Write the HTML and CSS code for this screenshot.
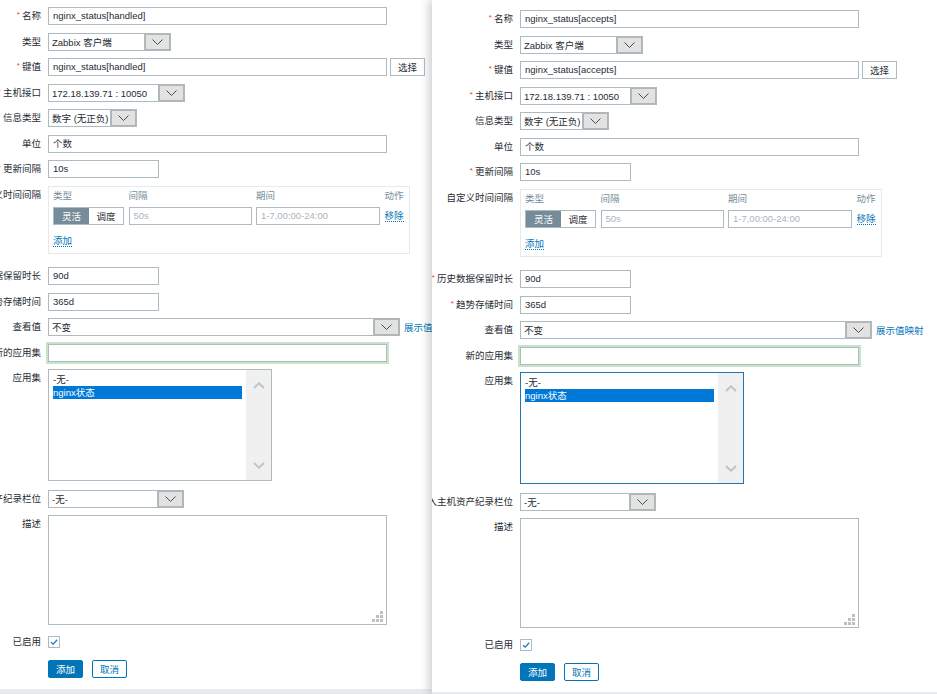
FILE: index.html
```html
<!DOCTYPE html>
<html lang="zh-CN">
<head>
<meta charset="utf-8">
<title>监控项</title>
<link rel="stylesheet" href="styles.css">
</head>
<body>
<div class="desk">

  <section class="win win-left">
    <div class="win-body">
      <div class="form">
        <div class="lbl"><span class="req">*</span>名称</div>
        <div class="inp w-full">nginx_status[handled]</div>

        <div class="lbl">类型</div>
        <div class="sel w-type"><span class="sel-text">Zabbix 客户端</span><span class="sel-btn"><svg width="11" height="6" viewBox="0 0 11 6"><polyline points="0.5,0.5 5.5,5.5 10.5,0.5" fill="none" stroke="#4a4a4a" stroke-width="1"/></svg></span></div>

        <div class="lbl"><span class="req">*</span>键值</div>
        <div class="line"><div class="inp w-full">nginx_status[handled]</div><span class="btn-plain">选择</span></div>

        <div class="lbl"><span class="req">*</span>主机接口</div>
        <div class="sel w-iface"><span class="sel-text">172.18.139.71 : 10050</span><span class="sel-btn"><svg width="11" height="6" viewBox="0 0 11 6"><polyline points="0.5,0.5 5.5,5.5 10.5,0.5" fill="none" stroke="#4a4a4a" stroke-width="1"/></svg></span></div>

        <div class="lbl">信息类型</div>
        <div class="sel w-info"><span class="sel-text">数字 (无正负)</span><span class="sel-btn"><svg width="11" height="6" viewBox="0 0 11 6"><polyline points="0.5,0.5 5.5,5.5 10.5,0.5" fill="none" stroke="#4a4a4a" stroke-width="1"/></svg></span></div>

        <div class="lbl">单位</div>
        <div class="inp w-full">个数</div>

        <div class="lbl"><span class="req">*</span>更新间隔</div>
        <div class="inp w-short">10s</div>

        <div class="lbl">自定义时间间隔</div>
        <div class="intervals">
          <div class="iv-grid">
            <span class="iv-h">类型</span><span class="iv-h">间隔</span><span class="iv-h">期间</span><span class="iv-h">动作</span>
            <div class="seg"><span class="seg-on">灵活</span><span class="seg-off">调度</span></div>
            <div class="inp ph">50s</div>
            <div class="inp ph">1-7,00:00-24:00</div>
            <span class="dlink">移除</span>
          </div>
          <span class="dlink add">添加</span>
        </div>

        <div class="lbl"><span class="req">*</span>历史数据保留时长</div>
        <div class="inp w-short">90d</div>

        <div class="lbl"><span class="req">*</span>趋势存储时间</div>
        <div class="inp w-short">365d</div>

        <div class="lbl">查看值</div>
        <div class="line"><div class="sel w-view"><span class="sel-text">不变</span><span class="sel-btn"><svg width="11" height="6" viewBox="0 0 11 6"><polyline points="0.5,0.5 5.5,5.5 10.5,0.5" fill="none" stroke="#4a4a4a" stroke-width="1"/></svg></span></div><span class="link">展示值映射</span></div>

        <div class="lbl">新的应用集</div>
        <div class="inp w-full glow"></div>

        <div class="lbl">应用集</div>
        <div class="lst">
          <div class="lst-items"><div class="opt">-无-</div><div class="opt opt-on">nginx状态</div></div>
          <div class="lst-bar">
            <svg width="12" height="7" viewBox="0 0 12 7"><polyline points="1,6 6,1.3 11,6" fill="none" stroke="#c3c3c3" stroke-width="2"/></svg>
            <svg width="12" height="7" viewBox="0 0 12 7"><polyline points="1,1 6,5.7 11,1" fill="none" stroke="#c3c3c3" stroke-width="2"/></svg>
          </div>
        </div>

        <div class="lbl">填入主机资产纪录栏位</div>
        <div class="sel w-inv"><span class="sel-text">-无-</span><span class="sel-btn"><svg width="11" height="6" viewBox="0 0 11 6"><polyline points="0.5,0.5 5.5,5.5 10.5,0.5" fill="none" stroke="#4a4a4a" stroke-width="1"/></svg></span></div>

        <div class="lbl">描述</div>
        <div class="ta"><svg class="grip" width="11" height="11" viewBox="0 0 11 11"><rect x="8" y="0" width="3" height="3" fill="#c0c0c0"/><rect x="4" y="4" width="3" height="3" fill="#c0c0c0"/><rect x="8" y="4" width="3" height="3" fill="#c0c0c0"/><rect x="0" y="8" width="3" height="3" fill="#c0c0c0"/><rect x="4" y="8" width="3" height="3" fill="#c0c0c0"/><rect x="8" y="8" width="3" height="3" fill="#c0c0c0"/></svg></div>

        <div class="lbl">已启用</div>
        <div class="chk-row"><span class="chk"><svg width="10" height="10" viewBox="0 0 10 10"><polyline points="2,5.2 4.2,7.2 8.2,2.8" fill="none" stroke="#1f7cc1" stroke-width="1.3"/></svg></span></div>

        <div class="lbl"></div>
        <div class="actions"><span class="btn btn-primary">添加</span><span class="btn btn-alt">取消</span></div>
      </div>
    </div>
    <div class="win-foot"></div>
  </section>

  <section class="win win-right">
    <div class="win-body">
      <div class="form">
        <div class="lbl"><span class="req">*</span>名称</div>
        <div class="inp w-full">nginx_status[accepts]</div>

        <div class="lbl">类型</div>
        <div class="sel w-type"><span class="sel-text">Zabbix 客户端</span><span class="sel-btn"><svg width="11" height="6" viewBox="0 0 11 6"><polyline points="0.5,0.5 5.5,5.5 10.5,0.5" fill="none" stroke="#4a4a4a" stroke-width="1"/></svg></span></div>

        <div class="lbl"><span class="req">*</span>键值</div>
        <div class="line"><div class="inp w-full">nginx_status[accepts]</div><span class="btn-plain">选择</span></div>

        <div class="lbl"><span class="req">*</span>主机接口</div>
        <div class="sel w-iface"><span class="sel-text">172.18.139.71 : 10050</span><span class="sel-btn"><svg width="11" height="6" viewBox="0 0 11 6"><polyline points="0.5,0.5 5.5,5.5 10.5,0.5" fill="none" stroke="#4a4a4a" stroke-width="1"/></svg></span></div>

        <div class="lbl">信息类型</div>
        <div class="sel w-info"><span class="sel-text">数字 (无正负)</span><span class="sel-btn"><svg width="11" height="6" viewBox="0 0 11 6"><polyline points="0.5,0.5 5.5,5.5 10.5,0.5" fill="none" stroke="#4a4a4a" stroke-width="1"/></svg></span></div>

        <div class="lbl">单位</div>
        <div class="inp w-full">个数</div>

        <div class="lbl"><span class="req">*</span>更新间隔</div>
        <div class="inp w-short">10s</div>

        <div class="lbl">自定义时间间隔</div>
        <div class="intervals">
          <div class="iv-grid">
            <span class="iv-h">类型</span><span class="iv-h">间隔</span><span class="iv-h">期间</span><span class="iv-h">动作</span>
            <div class="seg"><span class="seg-on">灵活</span><span class="seg-off">调度</span></div>
            <div class="inp ph">50s</div>
            <div class="inp ph">1-7,00:00-24:00</div>
            <span class="dlink">移除</span>
          </div>
          <span class="dlink add">添加</span>
        </div>

        <div class="lbl"><span class="req">*</span>历史数据保留时长</div>
        <div class="inp w-short">90d</div>

        <div class="lbl"><span class="req">*</span>趋势存储时间</div>
        <div class="inp w-short">365d</div>

        <div class="lbl">查看值</div>
        <div class="line"><div class="sel w-view"><span class="sel-text">不变</span><span class="sel-btn"><svg width="11" height="6" viewBox="0 0 11 6"><polyline points="0.5,0.5 5.5,5.5 10.5,0.5" fill="none" stroke="#4a4a4a" stroke-width="1"/></svg></span></div><span class="link">展示值映射</span></div>

        <div class="lbl">新的应用集</div>
        <div class="inp w-full glow"></div>

        <div class="lbl">应用集</div>
        <div class="lst lst-focus">
          <div class="lst-items"><div class="opt">-无-</div><div class="opt opt-on">nginx状态</div></div>
          <div class="lst-bar">
            <svg width="12" height="7" viewBox="0 0 12 7"><polyline points="1,6 6,1.3 11,6" fill="none" stroke="#c3c3c3" stroke-width="2"/></svg>
            <svg width="12" height="7" viewBox="0 0 12 7"><polyline points="1,1 6,5.7 11,1" fill="none" stroke="#c3c3c3" stroke-width="2"/></svg>
          </div>
        </div>

        <div class="lbl">填入主机资产纪录栏位</div>
        <div class="sel w-inv"><span class="sel-text">-无-</span><span class="sel-btn"><svg width="11" height="6" viewBox="0 0 11 6"><polyline points="0.5,0.5 5.5,5.5 10.5,0.5" fill="none" stroke="#4a4a4a" stroke-width="1"/></svg></span></div>

        <div class="lbl">描述</div>
        <div class="ta"><svg class="grip" width="11" height="11" viewBox="0 0 11 11"><rect x="8" y="0" width="3" height="3" fill="#c0c0c0"/><rect x="4" y="4" width="3" height="3" fill="#c0c0c0"/><rect x="8" y="4" width="3" height="3" fill="#c0c0c0"/><rect x="0" y="8" width="3" height="3" fill="#c0c0c0"/><rect x="4" y="8" width="3" height="3" fill="#c0c0c0"/><rect x="8" y="8" width="3" height="3" fill="#c0c0c0"/></svg></div>

        <div class="lbl">已启用</div>
        <div class="chk-row"><span class="chk"><svg width="10" height="10" viewBox="0 0 10 10"><polyline points="2,5.2 4.2,7.2 8.2,2.8" fill="none" stroke="#1f7cc1" stroke-width="1.3"/></svg></span></div>

        <div class="lbl"></div>
        <div class="actions"><span class="btn btn-primary">添加</span><span class="btn btn-alt">取消</span></div>
      </div>
    </div>
    <div class="win-foot"></div>
  </section>

</div>
</body>
</html>
```
FILE: styles.css
```css
* { box-sizing: border-box; }
html, body { margin: 0; padding: 0; }
body {
  font-family: "Liberation Sans", "Noto Sans CJK SC", sans-serif;
  font-size: 9.5px;
  color: #1f2c33;
  background: #fff;
  overflow: hidden;
}
.desk { display: flex; height: 694px; }
.win {
  display: flex;
  flex-direction: column;
  height: 694px;
  background: #fff;
  overflow: hidden;
}
.win-left { width: 432px; flex: none; }
.win-right {
  flex: 1;
  position: relative;
  z-index: 1;
  box-shadow: -3px 0 9px rgba(0, 0, 0, 0.2);
}
.win-body { flex: 1; overflow: hidden; }
.win-foot { background: #e8ebee; flex: none; }
.win-left .win-foot { height: 5px; }
.win-right .win-foot { height: 2px; }

.form {
  display: grid;
  grid-template-columns: 140px max-content;
  column-gap: 7px;
  row-gap: 7.5px;
  align-items: start;
  width: max-content;
}
.win-left .form { margin-left: -99px; padding-top: 7px; }
.win-right .form { margin-left: -59px; padding-top: 10px; }

.lbl {
  text-align: right;
  height: 18px;
  line-height: 18px;
  white-space: nowrap;
}
.req {
  color: #e0403a;
  font-size: 8px;
  margin-right: 2px;
  position: relative;
  top: -2px;
}

.inp {
  height: 18px;
  border: 1px solid #acbbc2;
  background: #fff;
  padding: 0 4px;
  line-height: 16px;
  white-space: nowrap;
  overflow: hidden;
}
.w-full { width: 339px; }
.w-short { width: 111px; }
.ph { color: #a9b5bc; }
.glow { box-shadow: 0 0 0 2px #c8e4c8; }

.line { display: flex; align-items: center; gap: 3px; }
.btn-plain {
  width: 35px;
  height: 18px;
  border: 1px solid #acbbc2;
  background: #fff;
  display: flex;
  align-items: center;
  justify-content: center;
}
.link { color: #0275b8; margin-left: 1px; white-space: nowrap; }

.sel {
  display: flex;
  height: 18px;
  border: 1px solid #acbbc2;
  background: #fff;
}
.sel-text {
  flex: 1;
  padding-left: 3px;
  line-height: 17px;
  white-space: nowrap;
  overflow: hidden;
}
.sel-btn {
  width: 26px;
  flex: none;
  background: #e2e2e2;
  border-left: 1px solid #acbbc2;
  box-shadow: inset 0 0 0 1px #b4b4b4;
  display: flex;
  align-items: center;
  justify-content: center;
}
.w-type { width: 123px; }
.w-iface { width: 137px; }
.w-info { width: 89px; }
.w-view { width: 352px; }
.w-inv { width: 136px; }

.intervals {
  width: 362px;
  height: 68px;
  border: 1px solid #e6eaec;
  padding: 3px 4px 0 4px;
  margin-bottom: 6px;
  display: flex;
  flex-direction: column;
  align-items: flex-start;
}
.iv-grid {
  display: grid;
  grid-template-columns: 71px 123px 124px max-content;
  grid-template-rows: 12px 18px;
  column-gap: 4.5px;
  row-gap: 5px;
  align-items: center;
}
.iv-h { color: #768d99; line-height: 12px; height: 12px; }
.seg {
  display: flex;
  height: 18px;
  border: 1px solid #acbbc2;
}
.seg-on {
  width: 35px;
  background: #768d99;
  color: #fff;
  display: flex;
  align-items: center;
  justify-content: center;
}
.seg-off {
  flex: 1;
  background: #fff;
  display: flex;
  align-items: center;
  justify-content: center;
}
.dlink {
  color: #0275b8;
  border-bottom: 1px dotted #0275b8;
  line-height: 11px;
  height: 12px;
}
.add { margin-top: 10px; }

.lst {
  width: 224px;
  height: 112px;
  border: 1px solid #acbbc2;
  display: flex;
  background: #fff;
  margin-bottom: 1px;
}
.lst-focus { border-color: #2176b4; }
.lst-items { flex: 1; padding: 3px 4px 0 4px; }
.opt { height: 13px; line-height: 13px; white-space: nowrap; }
.opt-on { background: #0078d7; color: #fff; }
.lst-bar {
  width: 25px;
  flex: none;
  background: #f0f0f0;
  display: flex;
  flex-direction: column;
  justify-content: space-between;
  align-items: center;
  padding: 12px 0 11px;
}

.ta {
  width: 339px;
  height: 110px;
  border: 1px solid #acbbc2;
  background: #fff;
  position: relative;
}
.grip { position: absolute; right: 3px; bottom: 2px; }

.chk-row { height: 18px; display: flex; align-items: center; }
.chk {
  width: 12px;
  height: 12px;
  border: 1px solid #acbbc2;
  background: #fff;
  display: flex;
  align-items: center;
  justify-content: center;
}

.actions { display: flex; gap: 9px; margin-top: 2px; }
.btn {
  width: 35px;
  height: 18px;
  border: 1px solid #0275b8;
  border-radius: 2px;
  display: flex;
  align-items: center;
  justify-content: center;
}
.btn-primary { background: #0275b8; color: #fff; }
.btn-alt { background: #fff; color: #0275b8; }
```
